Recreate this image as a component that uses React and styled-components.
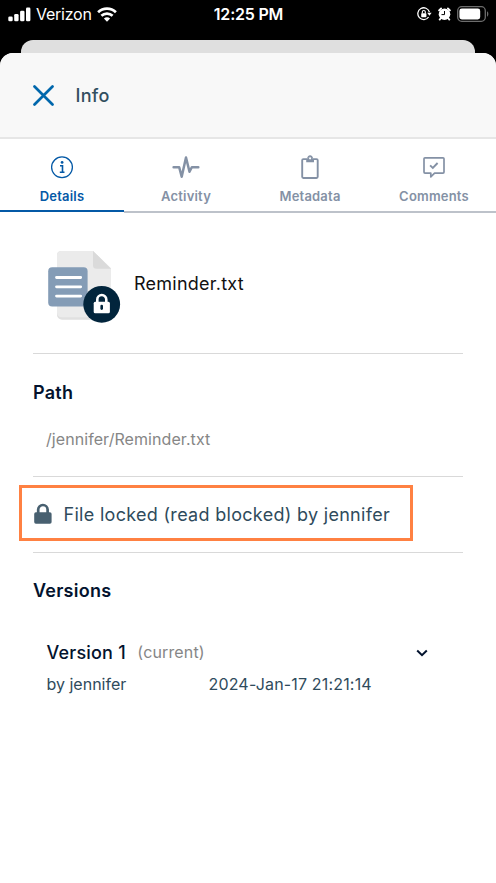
import React from "react";
import styled, { createGlobalStyle } from "styled-components";

const GlobalStyle = createGlobalStyle`
    body {
        margin: 0;
        background: #000;
        font-family: Inter, "Liberation Sans", sans-serif;
    }

    svg {
        display: block;
        flex: none;
    }
`;

const Screen = styled.div`
    display: flex;
    flex-direction: column;
    width: 496px;
    height: 883px;
    overflow: hidden;
    background: #000;
`;

const StatusBar = styled.div`
    display: grid;
    grid-template-columns: 1fr auto 1fr;
    align-items: center;
    height: 28px;
    margin-bottom: 12px;
    padding: 0 7px 0 8px;
    box-sizing: border-box;
    color: #fff;
`;

const StatusGroup = styled.div`
    display: flex;
    align-items: center;
    justify-content: ${props => props.$end ? "flex-end" : "flex-start"};
    gap: ${props => props.$end ? "6px" : "5px"};
`;

const Carrier = styled.span`
    font-size: 16px;
    line-height: 28px;
    letter-spacing: -0.25px;
`;

const Clock = styled.span`
    font-size: 16px;
    font-weight: 600;
    line-height: 28px;
    letter-spacing: -0.2px;
`;

const BackCard = styled.div`
    height: 13px;
    margin: 0 21px;
    border-radius: 12px 12px 0 0;
    background: #dfdfdf;
`;

const Sheet = styled.div`
    flex: 1;
    border-radius: 13px 13px 0 0;
    background: #fff;
    overflow: hidden;
`;

const Header = styled.div`
    display: flex;
    align-items: center;
    gap: 21.5px;
    height: 86px;
    padding-left: 33px;
    box-sizing: border-box;
    border-bottom: 2px solid #e6e6e6;
    background: #f8f8f8;
`;

const HeaderTitle = styled.h1`
    margin: 2px 0 0;
    color: #324f60;
    font-size: 18px;
    font-weight: 500;
    line-height: 24px;
    letter-spacing: 0.3px;
`;

const Tabs = styled.div`
    display: grid;
    grid-template-columns: repeat(4, 1fr);
    height: 74px;
`;

const Tab = styled.div`
    display: flex;
    flex-direction: column;
    align-items: center;
    padding-top: 15px;
    box-sizing: border-box;
    color: ${props => props.$active ? "#0459a6" : "#8491a5"};
    border-bottom: 2px solid ${props => props.$active ? "#0459a6" : "#bdc2ca"};
    height: ${props => props.$active ? "73px" : "74px"};
`;

const TabLabel = styled.span`
    margin-top: 6px;
    font-size: 13px;
    font-weight: 600;
    line-height: 20px;
    letter-spacing: 0.2px;
`;

const Content = styled.div`
    padding: 0 33px;
`;

const Section = styled.section`
    display: flow-root;
    height: ${props => props.$height}px;
    box-sizing: border-box;
    border-bottom: 1px solid #d9d9d9;
`;

const FileRow = styled.div`
    display: flex;
    align-items: center;
    gap: 13px;
    padding: 37px 0 0 15px;
`;

const FileName = styled.span`
    margin-top: -5px;
    color: #111;
    font-size: 18px;
    line-height: 24px;
    letter-spacing: 0.25px;
`;

const SectionTitle = styled.h2`
    margin: 0;
    padding-top: ${props => props.$top}px;
    color: #03132e;
    font-size: 18px;
    font-weight: 600;
    line-height: 24px;
    letter-spacing: 0.25px;
`;

const PathText = styled.div`
    margin: 24px 0 0 13px;
    color: #868686;
    font-size: 16px;
    line-height: 20px;
    letter-spacing: 0.07px;
`;

const LockNotice = styled.div`
    display: flex;
    align-items: center;
    gap: 11.5px;
    width: 394px;
    height: 56px;
    margin: 8px 0 0 -14px;
    padding-left: 12px;
    box-sizing: border-box;
    border: 3px solid #ff8142;
    color: #2f4b5c;
    font-size: 18px;
    letter-spacing: 0.3px;
    white-space: nowrap;

    span {
        padding-top: 2px;
    }
`;

const VersionEntry = styled.div`
    width: 382px;
    margin: 37px 0 0 13.5px;
`;

const VersionHead = styled.div`
    display: flex;
    align-items: center;
    height: 24px;

    svg {
        margin: 2px 0 0 auto;
    }
`;

const VersionName = styled.span`
    color: #03132e;
    font-size: 18px;
    font-weight: 500;
    letter-spacing: 0.2px;
`;

const VersionTag = styled.span`
    margin-left: 11.5px;
    color: #868686;
    font-size: 16px;
    letter-spacing: 0.15px;
`;

const VersionMeta = styled.div`
    display: grid;
    grid-template-columns: 162px 1fr;
    margin-top: 10px;
    color: #2f4b5c;
    font-size: 16px;
    line-height: 20px;
`;

const VersionDate = styled.span`
    letter-spacing: 0.17px;
`;

const SignalIcon = () => (
    <svg width="23" height="15" viewBox="0 0 23 15" fill="#fff">
        <rect x="0.3" y="9.5" width="4.4" height="4.8" rx="1.3" />
        <rect x="6.2" y="7" width="4.4" height="7.3" rx="1.3" />
        <rect x="12.1" y="3.8" width="4.4" height="10.5" rx="1.3" />
        <rect x="18" y="0.5" width="4.4" height="13.8" rx="1.3" />
    </svg>
);

const WifiIcon = () => (
    <svg width="20" height="15" viewBox="0 0 20 15" fill="none" stroke="#fff" strokeWidth="2.7">
        <path d="M1.1 5.3C6.1.5 13.9.5 18.9 5.3" />
        <path d="M4.4 8.8c3.1-3 8.1-3 11.2 0" />
        <path d="M10 14.7 6.9 11.5c1.8-1.6 4.4-1.6 6.2 0z" fill="#fff" stroke="none" />
    </svg>
);

const RotationLockIcon = () => (
    <svg width="15" height="14" viewBox="0 0 15 14" fill="none" stroke="#fff" strokeWidth="1.3">
        <path d="M12.4 5.1A5.9 5.9 0 1 0 11.6 10" />
        <path d="M10.2 5.8h4.4l-2.2 3z" fill="#fff" stroke="none" />
        <rect x="4.2" y="6.2" width="5.2" height="4.1" rx=".7" fill="#fff" stroke="none" />
        <path d="M5.3 6.5V5a1.5 1.5 0 0 1 3 0v1.5" strokeWidth="1.1" />
    </svg>
);

const AlarmIcon = () => (
    <svg width="13" height="14" viewBox="0.5 0 13 14">
        <circle cx="7" cy="7.2" r="5.8" fill="#fff" />
        <path d="M1.6 3.4l2-2M12.4 3.4l-2-2M3.2 11.3l-1 1.3M10.8 11.3l1 1.3" stroke="#fff" strokeWidth="1.8" strokeLinecap="round" />
        <path d="M7 4v3.6H4" fill="none" stroke="#000" strokeWidth="1" />
    </svg>
);

const BatteryIcon = () => (
    <svg width="32" height="16" viewBox="0 0 32 16">
        <rect x=".7" y=".7" width="27.6" height="14.6" rx="4" fill="none" stroke="#6d6d6d" strokeWidth="1.3" />
        <rect x="2.4" y="2.5" width="20.8" height="11" rx="2.4" fill="#fff" />
        <path d="M30 5.3c1.8.8 1.8 4.6 0 5.4z" fill="#6d6d6d" />
    </svg>
);

const CloseIcon = () => (
    <svg width="21" height="21" viewBox="0 0 21 21" stroke="#0067ac" strokeWidth="2.7" strokeLinecap="round">
        <path d="M1.5 1.5l18 18M19.5 1.5l-18 18" />
    </svg>
);

const InfoIcon = () => (
    <svg width="26" height="26" viewBox="0 0 26 26" fill="none" stroke="currentColor">
        <circle cx="13" cy="13.3" r="10.4" strokeWidth="1.3" />
        <circle cx="13.1" cy="8.4" r="1.4" fill="currentColor" stroke="none" />
        <path d="M11 11.7h2.5v6.5M10.8 18.3h4.7" strokeWidth="1.6" />
    </svg>
);

const ActivityIcon = () => (
    <svg width="28" height="26" viewBox="0 0 28 26" fill="none" stroke="currentColor" strokeWidth="2.5" strokeLinejoin="round" strokeLinecap="round">
        <path d="M1.6 13.3h5.6l2.5 9.4L14 3.5l3.5 14.3 2.3-4.5h6.5" />
    </svg>
);

const ClipboardIcon = () => (
    <svg width="26" height="26" viewBox="0 0 26 26" fill="none" stroke="currentColor">
        <rect x="5.2" y="5.1" width="15.5" height="18.9" rx="1.2" strokeWidth="1.9" />
        <path d="M9.2 5h2V3.8a1.9 1.9 0 0 1 3.8 0V5h2v3.3H9.2z" fill="currentColor" stroke="none" />
        <circle cx="13.1" cy="4.3" r="1.1" fill="#fff" stroke="none" />
        <path d="M10.8 4.2a2.3 2.3 0 0 1 4.6 0" strokeWidth="1.2" />
    </svg>
);

const CommentIcon = () => (
    <svg width="26" height="26" viewBox="0 0 26 26" fill="none" stroke="currentColor" strokeWidth="1.7" strokeLinejoin="round">
        <path d="M4 3.8h18a1 1 0 0 1 1 1v13.3a1 1 0 0 1-1 1h-8.4L9.8 22.8v-3.7H4a1 1 0 0 1-1-1V4.8a1 1 0 0 1 1-1z" />
        <path d="M9.1 11.4l2.7 2.5 4.8-4.9" strokeLinejoin="miter" strokeWidth="1.9" />
    </svg>
);

const LockedFileIcon = () => (
    <svg width="73" height="73" viewBox="0 0 73 73">
        <path d="M12.5.9H45L63 18.6v46.2a5 5 0 0 1-5 5H14a5 5 0 0 1-5-5V5.2A4.3 4.3 0 0 1 12.5.9z" fill="#e0e0e0" />
        <path d="M13.3.9H45L63 18.6v44.2a4.4 4.4 0 0 1-4.4 4.4H13.4A4.4 4.4 0 0 1 9 62.8V5.2A4.3 4.3 0 0 1 13.3.9z" fill="#ebebeb" />
        <path d="M45 .9 63 18.7H48.5A3.5 3.5 0 0 1 45 15.2z" fill="#dadada" />
        <rect x=".2" y="17.2" width="39.4" height="39.3" rx="4" fill="#849cb6" />
        <path d="M8.5 27.5h24.2M8.5 36.8h24.2M8.5 46.1h24.2" stroke="#fff" strokeWidth="2.8" strokeLinecap="round" />
        <circle cx="53.7" cy="54.3" r="18.4" fill="#02253c" />
        <rect x="45.7" y="51.8" width="16.2" height="11.4" rx="1.5" fill="#fff" />
        <path d="M49.3 52.5v-3a4.5 4.5 0 0 1 9 0v3" fill="none" stroke="#fff" strokeWidth="2.6" />
        <path d="M53.7 56v2.6" stroke="#02253c" strokeWidth="2.6" strokeLinecap="round" />
    </svg>
);

const LockIcon = () => (
    <svg width="18" height="21" viewBox="0 0 18 21">
        <rect x=".2" y="9.3" width="17.4" height="11.5" rx="1.7" fill="#486070" />
        <path d="M4.2 10V6.7a4.7 4.7 0 0 1 9.4 0V10" fill="none" stroke="#486070" strokeWidth="2.7" />
    </svg>
);

const ChevronIcon = () => (
    <svg width="14" height="10" viewBox="0 0 14 10" fill="none" stroke="#03132e" strokeWidth="2">
        <path d="M2.2 2.5 7 7.2l4.8-4.7" />
    </svg>
);

const tabs = [
    { label: "Details", Icon: InfoIcon },
    { label: "Activity", Icon: ActivityIcon },
    { label: "Metadata", Icon: ClipboardIcon },
    { label: "Comments", Icon: CommentIcon }
];

function App() {
    return (
        <Screen>
            <GlobalStyle />
            <StatusBar>
                <StatusGroup>
                    <SignalIcon />
                    <Carrier>Verizon</Carrier>
                    <WifiIcon />
                </StatusGroup>
                <Clock>12:25 PM</Clock>
                <StatusGroup $end>
                    <RotationLockIcon />
                    <AlarmIcon />
                    <BatteryIcon />
                </StatusGroup>
            </StatusBar>
            <BackCard />
            <Sheet>
                <Header>
                    <CloseIcon />
                    <HeaderTitle>Info</HeaderTitle>
                </Header>
                <Tabs>
                    {tabs.map(({ label, Icon }, index) => (
                        <Tab key={label} $active={index === 0}>
                            <Icon />
                            <TabLabel>{label}</TabLabel>
                        </Tab>
                    ))}
                </Tabs>
                <Content>
                    <Section $height={141}>
                        <FileRow>
                            <LockedFileIcon />
                            <FileName>Reminder.txt</FileName>
                        </FileRow>
                    </Section>
                    <Section $height={123}>
                        <SectionTitle $top={27}>Path</SectionTitle>
                        <PathText>/jennifer/Reminder.txt</PathText>
                    </Section>
                    <Section $height={76}>
                        <LockNotice>
                            <LockIcon />
                            <span>File locked (read blocked) by jennifer</span>
                        </LockNotice>
                    </Section>
                    <SectionTitle $top={26}>Versions</SectionTitle>
                    <VersionEntry>
                        <VersionHead>
                            <VersionName>Version 1</VersionName>
                            <VersionTag>(current)</VersionTag>
                            <ChevronIcon />
                        </VersionHead>
                        <VersionMeta>
                            <span>by jennifer</span>
                            <VersionDate>2024-Jan-17 21:21:14</VersionDate>
                        </VersionMeta>
                    </VersionEntry>
                </Content>
            </Sheet>
        </Screen>
    );
}

export default App;
